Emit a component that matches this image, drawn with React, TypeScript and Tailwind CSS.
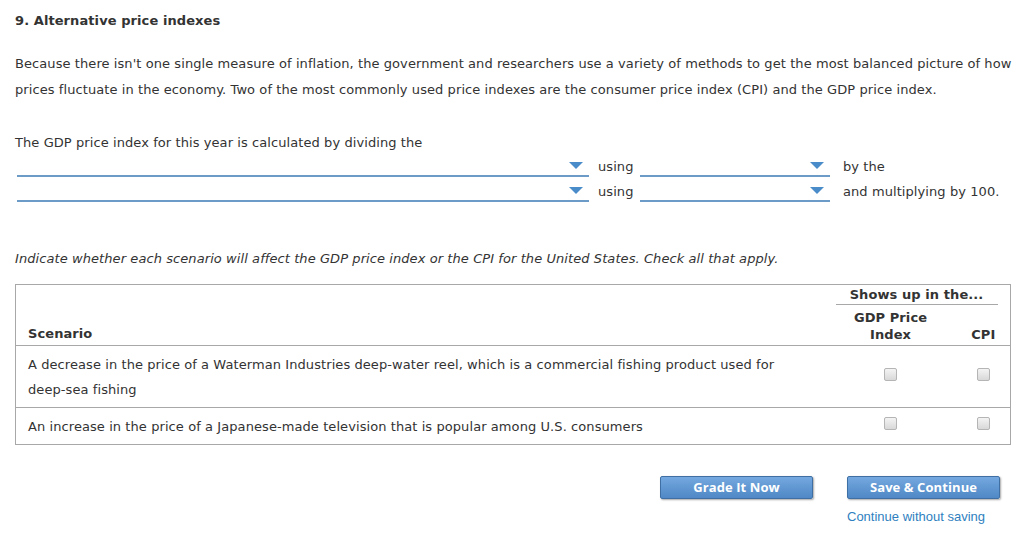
import React from 'react';

const Dropdown: React.FC<{ className: string }> = ({ className }) => (
  <div className={`relative h-[20px] border-b-2 border-[#6c9bc7] ${className}`}>
    <svg
      className="absolute right-[6px] top-[5px]"
      width="14"
      height="8"
      viewBox="0 0 14 8"
    >
      <polygon points="0,0 14,0 7,7" fill="#4a8cc9" />
    </svg>
  </div>
);

const Checkbox: React.FC = () => (
  <span className="inline-block w-[13px] h-[13px] rounded-[2px] border border-[#b5b5b5] bg-gradient-to-b from-[#f4f4f4] to-[#d8d8d8]" />
);

const BlueButton: React.FC<{ label: string }> = ({ label }) => (
  <button className="w-[153px] h-[23px] rounded-[2px] border border-[#3f6fa3] bg-gradient-to-b from-[#74a8df] to-[#4f88c6] text-white text-[13px] font-bold leading-none shadow-[1px_1px_2px_rgba(0,0,0,0.35)] font-['Open_Sans',sans-serif]">
    {label}
  </button>
);

export default function App() {
  return (
    <div className="w-[1024px] h-[536px] bg-white text-[#333] text-[13px] tracking-[0.08px] font-['DejaVu_Sans',Verdana,sans-serif] px-[15px] pt-[12px]">
      <h1 className="font-bold text-[13px] leading-[18px]">9. Alternative price indexes</h1>

      <p className="mt-[21px] mr-[-12px] leading-[26px]">
        Because there isn't one single measure of inflation, the government and researchers use a variety of methods to get the most balanced picture of how
        prices fluctuate in the economy. Two of the most commonly used price indexes are the consumer price index (CPI) and the GDP price index.
      </p>

      <p className="mt-[30px] leading-[20px]">The GDP price index for this year is calculated by dividing the</p>

      <div className="mt-[4px] flex flex-col gap-[5px]">
        <div className="flex items-center">
          <Dropdown className="w-[572px] ml-[2px]" />
          <span className="ml-[9px] w-[42px]">using</span>
          <Dropdown className="w-[190px]" />
          <span className="ml-[13px]">by the</span>
        </div>
        <div className="flex items-center">
          <Dropdown className="w-[572px] ml-[2px]" />
          <span className="ml-[9px] w-[42px]">using</span>
          <Dropdown className="w-[190px]" />
          <span className="ml-[13px]">and multiplying by 100.</span>
        </div>
      </div>

      <p className="mt-[47px] italic leading-[20px]">
        Indicate whether each scenario will affect the GDP price index or the CPI for the United States. Check all that apply.
      </p>

      <table className="mt-[15px] w-[996px] border border-[#a8a8a8] border-collapse">
        <thead>
          <tr>
            <th className="text-left align-bottom pl-[12px] pb-[2px] font-bold" rowSpan={2}>
              Scenario
            </th>
            <th colSpan={2} className="pt-[2px] pb-0 font-bold">
              <div className="ml-[11px] w-[162px] border-b border-[#a8a8a8] pb-[1px] leading-[16px]">Shows up in the...</div>
            </th>
          </tr>
          <tr className="border-b border-[#a8a8a8]">
            <th className="w-[132px] font-bold leading-[17px] pt-[4px] pb-[2px]">
              GDP Price
              <br />
              Index
            </th>
            <th className="w-[54px] font-bold align-bottom pb-[2px] leading-[17px]">CPI</th>
          </tr>
        </thead>
        <tbody>
          <tr className="border-b border-[#a8a8a8]">
            <td className="pl-[12px] pr-[40px] pt-[6px] pb-[5px] leading-[25px]">
              A decrease in the price of a Waterman Industries deep-water reel, which is a commercial fishing product used for deep-sea fishing
            </td>
            <td className="text-center">
              <Checkbox />
            </td>
            <td className="text-center">
              <Checkbox />
            </td>
          </tr>
          <tr>
            <td className="pl-[12px] pt-[6px] pb-[5px] leading-[25px]">
              An increase in the price of a Japanese-made television that is popular among U.S. consumers
            </td>
            <td className="text-center">
              <Checkbox />
            </td>
            <td className="text-center">
              <Checkbox />
            </td>
          </tr>
        </tbody>
      </table>

      <div className="mt-[31px] flex justify-end pr-[9px] gap-[34px]">
        <BlueButton label="Grade It Now" />
        <div className="flex flex-col items-start">
          <BlueButton label="Save & Continue" />
          <a className="mt-[10px] text-[13px] tracking-normal text-[#2f7fc0] font-['Liberation_Sans',Arial,sans-serif] leading-[16px]">
            Continue without saving
          </a>
        </div>
      </div>
    </div>
  );
}
